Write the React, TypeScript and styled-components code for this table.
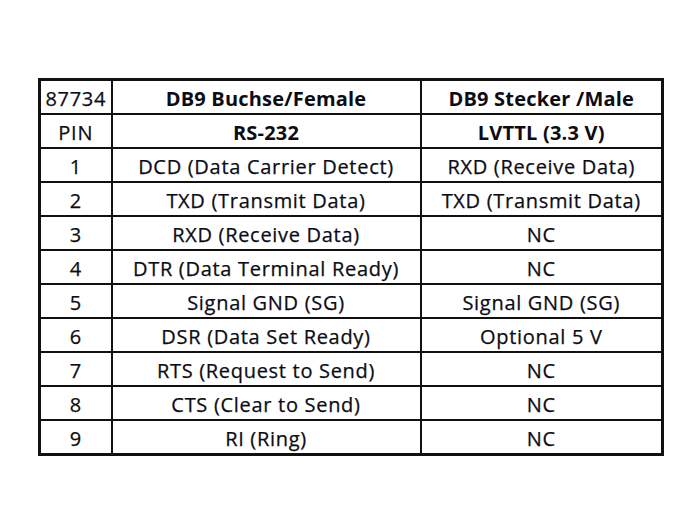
import React, { ReactElement } from 'react'
import styled, { createGlobalStyle } from 'styled-components'

const rows: [string, string, string][] = [
  ['1', 'DCD (Data Carrier Detect)', 'RXD (Receive Data)'],
  ['2', 'TXD (Transmit Data)', 'TXD (Transmit Data)'],
  ['3', 'RXD (Receive Data)', 'NC'],
  ['4', 'DTR (Data Terminal Ready)', 'NC'],
  ['5', 'Signal GND (SG)', 'Signal GND (SG)'],
  ['6', 'DSR (Data Set Ready)', 'Optional 5 V'],
  ['7', 'RTS (Request to Send)', 'NC'],
  ['8', 'CTS (Clear to Send)', 'NC'],
  ['9', 'RI (Ring)', 'NC'],
]

export default function App(): ReactElement {
  return (
    <>
      <GlobalStyle />
      <Page>
        <PinTable>
          <colgroup>
            <col style={{ width: 72 }} />
            <col style={{ width: 309 }} />
            <col style={{ width: 242 }} />
          </colgroup>
          <tbody>
            <tr>
              <Cell>87734</Cell>
              <Cell bold>DB9 Buchse/Female</Cell>
              <Cell bold>DB9 Stecker /Male</Cell>
            </tr>
            <tr>
              <Cell>PIN</Cell>
              <Cell bold>RS-232</Cell>
              <Cell bold>LVTTL (3.3 V)</Cell>
            </tr>
            {rows.map(([pin, rs, ttl]) => (
              <tr key={pin}>
                <Cell>{pin}</Cell>
                <Cell>{rs}</Cell>
                <Cell>{ttl}</Cell>
              </tr>
            ))}
          </tbody>
        </PinTable>
      </Page>
    </>
  )
}

const GlobalStyle = createGlobalStyle`
  body {
    margin: 0;
    background: #fff;
  }
`

const Page = styled.div`
  width: 700px;
  height: 530px;
  padding: 78px 0 0 38px;
  box-sizing: border-box;
`

const PinTable = styled.table`
  border-collapse: collapse;
  table-layout: fixed;
  width: 623px;
  border: 3px solid #111;
  font-family: "Open Sans", "Liberation Sans", sans-serif;
  color: #0c0c14;
`

const Cell = styled.td<{ bold?: boolean }>`
  height: 28px;
  padding: 4px 0 0;
  border: 2px solid #111;
  text-align: center;
  font-size: 20px;
  font-weight: ${p => (p.bold ? 700 : 400)};
  letter-spacing: ${p => (p.bold ? '0.2px' : '0.7px')};
  white-space: nowrap;
  line-height: 1;
  -webkit-text-stroke: ${p => (p.bold ? '0' : '0.25px')};
`
